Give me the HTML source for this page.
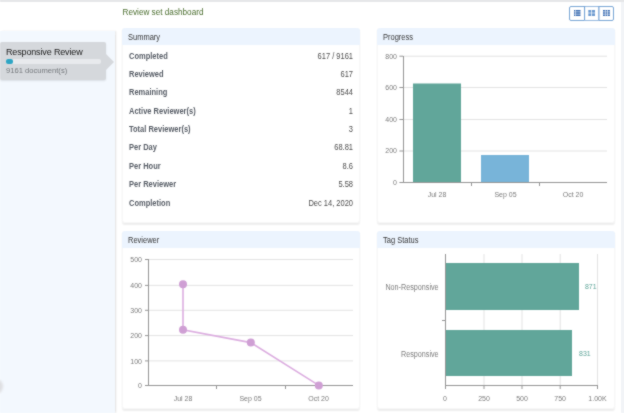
<!DOCTYPE html>
<html><head><meta charset="utf-8">
<style>
*{box-sizing:border-box;margin:0;padding:0}
html,body{width:624px;height:413px;overflow:hidden;background:#fff;font-family:"Liberation Sans",sans-serif;position:relative}
.topline{position:absolute;left:0;top:0;width:624px;height:2px;background:#e6e7e9}
.rightbar{position:absolute;left:621px;top:2px;width:3px;height:411px;background:#f2f4f7}
.sidebar{position:absolute;left:0;top:31px;width:115px;height:382px;background:#f3f8fe;box-shadow:1.5px 0 1.5px rgba(0,0,0,.09)}
.card{position:absolute;left:0;top:42px;width:106px;height:38px;background:#d5d8dc;border-radius:2px;box-shadow:0 1px 2px rgba(0,0,0,.1)}
.card .arrow{position:absolute;left:106px;top:11.5px;width:0;height:0;border-top:8.5px solid transparent;border-bottom:8.5px solid transparent;border-left:8px solid #d5d8dc}
.card .t{position:absolute;left:6px;top:5px;font-size:9px;letter-spacing:-0.15px;color:#1a1a1a}
.card .pb{position:absolute;left:6px;top:17px;width:94.5px;height:4.5px;background:#e8eaed;border-radius:2px}
.card .pf{position:absolute;left:0;top:0;width:6.5px;height:4.5px;background:#2ea5c4;border-radius:2px}
.card .d{position:absolute;left:6px;top:24px;font-size:7.6px;color:#74787c}
.circle{position:absolute;left:-11px;top:379px;width:14px;height:15px;border-radius:50%;background:#dedfe2;filter:blur(1.2px)}
.title{position:absolute;left:122.5px;top:7.7px;font-size:8.2px;color:#4a6d2e}
.btns{position:absolute;left:569px;top:6px;width:45px;height:15px;border:1px solid #7aa7d6;border-radius:2px;background:#fff}
.btns .b{position:absolute;top:0;height:13px;width:15px}
.panel{position:absolute;background:#fff;border-radius:3px;box-shadow:0 1.5px 1.5px rgba(0,0,0,.07),inset 0 0 0 1px rgba(0,0,0,.03)}
.panel .h{position:absolute;left:0;top:0;right:0;height:17px;background:#ecf4fe;border-radius:3px 3px 0 0;font-size:7.5px;color:#363636;padding:4px 0 0 6px}
.row{position:absolute;left:7px;right:6.6px;height:12px;font-size:7.5px;color:#4c4c4c;margin-top:-0.5px}
.row b{position:absolute;left:0;top:0;font-weight:bold;color:#575d66;transform:translateY(0.8px) scaleY(1.15);transform-origin:50% 55%}
.row span{position:absolute;right:0;top:0;transform:translateY(0.8px) scaleY(1.15);transform-origin:50% 55%}
.h span{display:inline-block;transform:translateY(0.7px) scaleY(1.12);transform-origin:50% 60%}
svg text{font-family:"Liberation Sans",sans-serif;transform-box:fill-box;transform-origin:50% 60%;transform:scaleY(1.15)}
</style></head><body><svg width="0" height="0" style="position:absolute"><filter id="bl" x="0" y="0" width="100%" height="100%" color-interpolation-filters="sRGB"><feConvolveMatrix order="3" kernelMatrix="1 2 1 2 16 2 1 2 1" divisor="28" edgeMode="duplicate"/></filter></svg><div id="wrap" style="position:absolute;left:0;top:0;width:624px;height:413px;filter:url(#bl)">
<div class="topline"></div>
<div class="rightbar"></div>
<div class="sidebar"></div>
<div class="card"><div class="arrow"></div><div class="t">Responsive Review</div><div class="pb"><div class="pf"></div></div><div class="d">9161 document(s)</div></div>
<div class="circle"></div>
<div class="title">Review set dashboard</div>
<div class="btns">
<svg width="46" height="16" style="position:absolute;left:-2px;top:-2px">
<rect x="16.6" y="1.5" width="14.3" height="14" fill="none" stroke="#a8c5e6" stroke-width="0.6"/>
<line x1="16.6" y1="1" x2="16.6" y2="15" stroke="#6f9fd3" stroke-width="1"/>
<line x1="30.9" y1="1" x2="30.9" y2="15" stroke="#6f9fd3" stroke-width="1"/>
<g fill="#3d6fb4"><rect x="6" y="5.0" width="1.2" height="1.6"/><rect x="7.7" y="5.0" width="4.8" height="1.6"/><rect x="6" y="7.2" width="1.2" height="1.6"/><rect x="7.7" y="7.2" width="4.8" height="1.6"/><rect x="6" y="9.4" width="1.2" height="1.6"/><rect x="7.7" y="9.4" width="4.8" height="1.6"/></g>
<g fill="#6d9bd0"><rect x="20.3" y="5" width="3" height="2.7"/><rect x="24" y="5" width="3" height="2.7"/><rect x="20.3" y="8.3" width="3" height="2.7"/><rect x="24" y="8.3" width="3" height="2.7"/></g>
<g fill="#3d6fb4"><rect x="35" y="5.0" width="1.9" height="1.6"/><rect x="37.5" y="5.0" width="1.9" height="1.6"/><rect x="40" y="5.0" width="1.9" height="1.6"/><rect x="35" y="7.2" width="1.9" height="1.6"/><rect x="37.5" y="7.2" width="1.9" height="1.6"/><rect x="40" y="7.2" width="1.9" height="1.6"/><rect x="35" y="9.4" width="1.9" height="1.6"/><rect x="37.5" y="9.4" width="1.9" height="1.6"/><rect x="40" y="9.4" width="1.9" height="1.6"/></g>
</svg>
</div>

<div class="panel" style="left:122px;top:28px;width:237.6px;height:194.5px">
<div class="h"><span>Summary</span></div>
<div class="row" style="top:23px"><b>Completed</b><span>617 / 9161</span></div>
<div class="row" style="top:41px"><b>Reviewed</b><span>617</span></div>
<div class="row" style="top:59px"><b>Remaining</b><span>8544</span></div>
<div class="row" style="top:78px"><b>Active Reviewer(s)</b><span>1</span></div>
<div class="row" style="top:96px"><b>Total Reviewer(s)</b><span>3</span></div>
<div class="row" style="top:114px"><b>Per Day</b><span>68.81</span></div>
<div class="row" style="top:133px"><b>Per Hour</b><span>8.6</span></div>
<div class="row" style="top:151px"><b>Per Reviewer</b><span>5.58</span></div>
<div class="row" style="top:170px"><b>Completion</b><span>Dec 14, 2020</span></div>
</div>

<div class="panel" style="left:377px;top:28px;width:237.6px;height:194.5px">
<div class="h"><span>Progress</span></div>
</div>

<div class="panel" style="left:122px;top:231px;width:237.6px;height:178px">
<div class="h"><span>Reviewer</span></div>
</div>

<div class="panel" style="left:377px;top:231px;width:237.6px;height:178px">
<div class="h"><span>Tag Status</span></div>
</div>

<svg width="624" height="413" style="position:absolute;left:0;top:0">
<!-- Progress chart -->
<g stroke="#e3e3e3" stroke-width="1">
<line x1="403" y1="56.2" x2="607" y2="56.2"/>
<line x1="403" y1="87.5" x2="607" y2="87.5"/>
<line x1="403" y1="119.5" x2="607" y2="119.5"/>
<line x1="403" y1="151" x2="607" y2="151"/>
</g>
<rect x="413" y="83.5" width="48" height="98.5" fill="#61a69a"/>
<rect x="481" y="155" width="48" height="27" fill="#78b4d9"/>
<g stroke="#959595" stroke-width="1">
<line x1="403.5" y1="56" x2="403.5" y2="182"/>
<line x1="403" y1="182.5" x2="607" y2="182.5"/>
<line x1="399.4" y1="56.2" x2="403" y2="56.2"/>
<line x1="399.4" y1="87.5" x2="403" y2="87.5"/>
<line x1="399.4" y1="119.5" x2="403" y2="119.5"/>
<line x1="399.4" y1="151" x2="403" y2="151"/>
<line x1="399.4" y1="182.5" x2="403" y2="182.5"/>
<line x1="471.5" y1="182" x2="471.5" y2="186"/>
<line x1="539.5" y1="182" x2="539.5" y2="186"/>
</g>
<g font-size="7" fill="#7c7c7c" text-anchor="end">
<text x="397" y="59">800</text>
<text x="397" y="90">600</text>
<text x="397" y="122">400</text>
<text x="397" y="153">200</text>
<text x="397" y="185">0</text>
</g>
<g font-size="7" fill="#7c7c7c" text-anchor="middle">
<text x="437" y="196.8">Jul 28</text>
<text x="505.5" y="196.8">Sep 05</text>
<text x="573" y="196.8">Oct 20</text>
</g>

<!-- Reviewer chart -->
<g stroke="#e3e3e3" stroke-width="1">
<line x1="148" y1="259.5" x2="353" y2="259.5"/>
<line x1="148" y1="285.4" x2="353" y2="285.4"/>
<line x1="148" y1="310.3" x2="353" y2="310.3"/>
<line x1="148" y1="335.6" x2="353" y2="335.6"/>
<line x1="148" y1="360.9" x2="353" y2="360.9"/>
</g>
<g stroke="#959595" stroke-width="1">
<line x1="148.5" y1="259" x2="148.5" y2="386"/>
<line x1="148" y1="385.5" x2="353" y2="385.5"/>
<line x1="145" y1="259.5" x2="148" y2="259.5"/>
<line x1="145" y1="285.4" x2="148" y2="285.4"/>
<line x1="145" y1="310.3" x2="148" y2="310.3"/>
<line x1="145" y1="335.6" x2="148" y2="335.6"/>
<line x1="145" y1="360.9" x2="148" y2="360.9"/>
<line x1="145" y1="385.5" x2="148" y2="385.5"/>
<line x1="216.5" y1="385" x2="216.5" y2="389"/>
<line x1="285.5" y1="385" x2="285.5" y2="389"/>
</g>
<polyline points="183,284.3 183,329.8 250.8,342.6 318.8,385.4" fill="none" stroke="#dcaee0" stroke-width="1.6"/>
<g fill="#cf9fd4">
<circle cx="183" cy="284.3" r="4"/>
<circle cx="183" cy="329.8" r="4"/>
<circle cx="250.8" cy="342.6" r="4"/>
<circle cx="318.8" cy="385.4" r="4"/>
</g>
<g font-size="7" fill="#7c7c7c" text-anchor="end">
<text x="142" y="262">500</text>
<text x="142" y="288">400</text>
<text x="142" y="313">300</text>
<text x="142" y="338">200</text>
<text x="142" y="363.4">100</text>
<text x="142" y="388">0</text>
</g>
<g font-size="7" fill="#7c7c7c" text-anchor="middle">
<text x="183" y="400.4">Jul 28</text>
<text x="250.5" y="400.4">Sep 05</text>
<text x="318.5" y="400.4">Oct 20</text>
</g>

<!-- Tag status chart -->
<g stroke="#e3e3e3" stroke-width="1">
<line x1="484" y1="254" x2="484" y2="386"/>
<line x1="522" y1="254" x2="522" y2="386"/>
<line x1="560.2" y1="254" x2="560.2" y2="386"/>
<line x1="597.5" y1="254" x2="597.5" y2="386"/>
</g>
<rect x="445" y="263" width="134" height="47" fill="#61a69a"/>
<rect x="445" y="330" width="127" height="46" fill="#61a69a"/>
<g stroke="#959595" stroke-width="1">
<line x1="445.5" y1="254" x2="445.5" y2="386"/>
<line x1="445" y1="385.5" x2="598" y2="385.5"/>
<line x1="442" y1="320.5" x2="445" y2="320.5"/>
<line x1="445.5" y1="386" x2="445.5" y2="389"/>
<line x1="484" y1="386" x2="484" y2="389"/>
<line x1="522" y1="386" x2="522" y2="389"/>
<line x1="560.2" y1="386" x2="560.2" y2="389"/>
<line x1="597.5" y1="386" x2="597.5" y2="389"/>
</g>
<g font-size="7" fill="#61a69a">
<text x="585" y="289">871</text>
<text x="579" y="356">831</text>
</g>
<g font-size="7.2" fill="#7c7c7c" text-anchor="end">
<text x="438.6" y="289.6">Non-Responsive</text>
<text x="438.6" y="356.4">Responsive</text>
</g>
<g font-size="7" fill="#7c7c7c" text-anchor="middle">
<text x="445" y="400.3">0</text>
<text x="484" y="400.3">250</text>
<text x="522" y="400.3">500</text>
<text x="560.2" y="400.3">750</text>
<text x="597.5" y="400.3">1.00K</text>
</g>
</svg>
</div></body></html>
